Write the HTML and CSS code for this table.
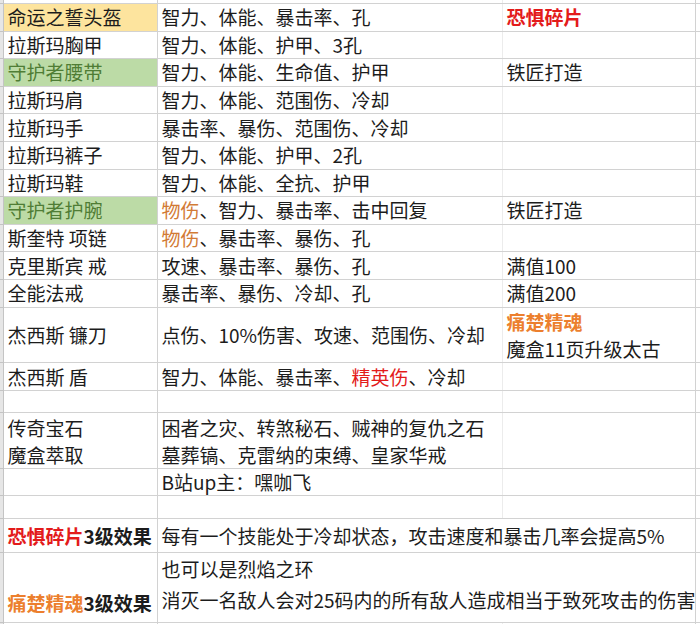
FILE: index.html
```html
<!DOCTYPE html>
<html lang="zh">
<head>
<meta charset="utf-8">
<title>装备表</title>
<link rel="stylesheet" href="styles.css">
</head>
<body>
<table class="sheet">
  <colgroup>
    <col class="c-gutter"><col class="c-name"><col class="c-attr"><col class="c-note"><col class="c-extra">
  </colgroup>
  <tr class="r-top"><td class="gutter"></td><td></td><td></td><td></td><td></td></tr>
  <tr class="r"><td class="gutter"></td><td class="fill-yellow">命运之誓头盔</td><td>智力、体能、暴击率、孔</td><td class="red bold">恐惧碎片</td><td></td></tr>
  <tr class="r"><td class="gutter"></td><td>拉斯玛胸甲</td><td>智力、体能、护甲、3孔</td><td></td><td></td></tr>
  <tr class="r"><td class="gutter"></td><td class="fill-green">守护者腰带</td><td>智力、体能、生命值、护甲</td><td>铁匠打造</td><td></td></tr>
  <tr class="r"><td class="gutter"></td><td>拉斯玛肩</td><td>智力、体能、范围伤、冷却</td><td></td><td></td></tr>
  <tr class="r"><td class="gutter"></td><td>拉斯玛手</td><td>暴击率、暴伤、范围伤、冷却</td><td></td><td></td></tr>
  <tr class="r"><td class="gutter"></td><td>拉斯玛裤子</td><td>智力、体能、护甲、2孔</td><td></td><td></td></tr>
  <tr class="r"><td class="gutter"></td><td>拉斯玛鞋</td><td>智力、体能、全抗、护甲</td><td></td><td></td></tr>
  <tr class="r"><td class="gutter"></td><td class="fill-green">守护者护腕</td><td><span class="orange">物伤</span>、智力、暴击率、击中回复</td><td>铁匠打造</td><td></td></tr>
  <tr class="r"><td class="gutter"></td><td>斯奎特 项链</td><td><span class="orange">物伤</span>、暴击率、暴伤、孔</td><td></td><td></td></tr>
  <tr class="r"><td class="gutter"></td><td>克里斯宾 戒</td><td>攻速、暴击率、暴伤、孔</td><td>满值100</td><td></td></tr>
  <tr class="r"><td class="gutter"></td><td>全能法戒</td><td>暴击率、暴伤、冷却、孔</td><td>满值200</td><td></td></tr>
  <tr class="r-tall"><td class="gutter"></td><td>杰西斯 镰刀</td><td>点伤、10%伤害、攻速、范围伤、冷却</td><td><div class="orange-bold">痛楚精魂</div><div>魔盒11页升级太古</div></td><td></td></tr>
  <tr class="r r-28"><td class="gutter"></td><td>杰西斯 盾</td><td>智力、体能、暴击率、<span class="red">精英伤</span>、冷却</td><td></td><td></td></tr>
  <tr class="r-gap"><td class="gutter"></td><td></td><td></td><td></td><td></td></tr>
  <tr class="r-tall"><td class="gutter"></td><td><div>传奇宝石</div><div>魔盒萃取</div></td><td><div>困者之灾、转煞秘石、贼神的复仇之石</div><div>墓葬镐、克雷纳的束缚、皇家华戒</div></td><td></td><td></td></tr>
  <tr class="r"><td class="gutter"></td><td></td><td>B站up主：嘿咖飞</td><td></td><td></td></tr>
  <tr class="r-gap2"><td class="gutter"></td><td></td><td></td><td></td><td></td></tr>
  <tr class="r-mid"><td class="gutter"></td><td class="bold"><span class="red">恐惧碎片</span>3级效果</td><td class="wide" colspan="2">每有一个技能处于冷却状态，攻击速度和暴击几率会提高5%</td><td></td></tr>
  <tr class="r-big"><td class="gutter"></td><td class="bold bottom"><span class="orange-bold">痛楚精魂</span>3级效果</td><td class="wide two" colspan="2"><div>也可以是烈焰之环</div><div>消灭一名敌人会对25码内的所有敌人造成相当于致死攻击的伤害</div></td><td></td></tr>
  <tr class="r"><td class="gutter"></td><td></td><td></td><td></td><td></td></tr>
</table>
</body>
</html>
```

FILE: styles.css
```css
html, body {
  margin: 0;
  padding: 0;
  background: #ffffff;
  overflow: hidden;
}

.sheet {
  border-collapse: collapse;
  table-layout: fixed;
  width: 720px;
  font-family: "Noto Sans CJK SC", "Microsoft YaHei", sans-serif;
  font-size: 19px;
  color: #1c1c1c;
}

.c-gutter { width: 3px; }
.c-name { width: 154px; }
.c-attr { width: 345px; }
.c-note { width: 193px; }
.c-extra { width: 25px; }

.sheet td {
  border: 1px solid #d2d2d2;
  padding: 0 4px;
  white-space: nowrap;
  overflow: visible;
  vertical-align: middle;
  line-height: 27px;
}

.sheet td:nth-child(3):not(.wide) {
  border-right-color: #ececec;
}

.sheet td:nth-child(4) {
  border-left-color: #ececec;
}

.sheet td.gutter {
  background: #e6e6e6;
  padding: 0;
  border-left: none;
  border-color: #c4c4c4;
}

.r-top td { height: 3px; line-height: 3px; border-top: none; }
.r td { height: 26.6px; line-height: 24px; }
.r-28 td { height: 27.4px; }
.r-tall td { height: 54.4px; }
.r-gap td { height: 21px; line-height: 20px; }
.r-gap2 td { height: 22px; line-height: 20px; }
.r-mid td { height: 33px; }
.r-big td { height: 65px; }

.sheet td.two {
  vertical-align: top;
  line-height: 31px;
}

.sheet td.bottom {
  vertical-align: bottom;
  line-height: 31px;
  padding-bottom: 4px;
}

.fill-yellow {
  background: #fde49e;
}

.fill-green {
  background: #bcdba6;
  color: #4f7d35;
}

.red {
  color: #e31b1b;
}

.bold {
  font-weight: bold;
}

.orange {
  color: #d27a35;
}

.orange-bold {
  color: #ec7f2e;
  font-weight: bold;
}
```
